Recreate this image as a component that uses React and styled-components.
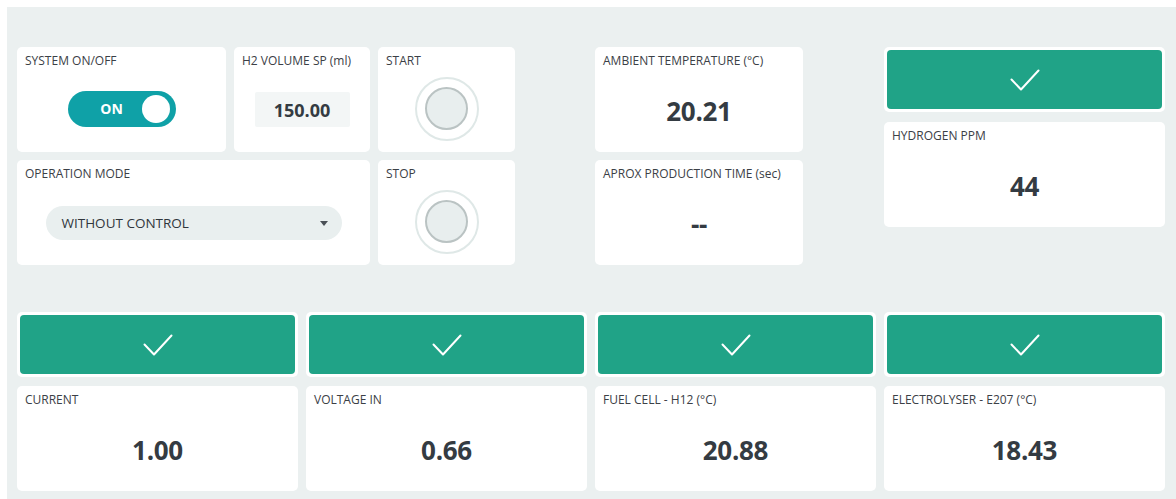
import styled, { createGlobalStyle } from "styled-components";

const GlobalStyle = createGlobalStyle`
  body {
    margin: 0;
    overflow: hidden;
    background: #ffffff;
    font-family: "Open Sans", "Liberation Sans", sans-serif;
    color: #343a40;
  }
`

const Page = styled.div`
  padding: 7px 0 0 7px;
`

const Panel = styled.div`
  background: #ebf0f0;
  height: 492px;
  box-sizing: border-box;
  padding: 40px 11px 8px 10px;
  display: flex;
  flex-direction: column;
  gap: 47px;
`

const TopSection = styled.div`
  display: grid;
  grid-template-columns: repeat(4, 1fr);
  column-gap: 8px;
  align-items: start;
`

const Controls = styled.div`
  grid-column: span 2;
  display: grid;
  grid-template-columns: 209px 136px 137px;
  grid-template-rows: 105px 105px;
  column-gap: 8px;
  row-gap: 8px;
`

const Column = styled.div`
  display: flex;
  flex-direction: column;
  gap: ${(p) => p.$gap || 8}px;
  width: ${(p) => (p.$width ? `${p.$width}px` : "auto")};
`

const BottomSection = styled.div`
  display: grid;
  grid-template-columns: repeat(4, 1fr);
  column-gap: 8px;
`

const Card = styled.div`
  background: #ffffff;
  border-radius: 5px;
  padding: 6px 8px;
  display: flex;
  flex-direction: column;
  height: 105px;
  box-sizing: border-box;
  grid-column: ${(p) => p.$span ? `span ${p.$span}` : "auto"};
`

const Label = styled.div`
  font-size: 12px;
  line-height: 16px;
  color: #3b4046;
  white-space: nowrap;
`

const Body = styled.div`
  flex: 1;
  display: flex;
  align-items: center;
  justify-content: center;
  padding-top: 2px;
`

const Value = styled.div`
  font-size: 26px;
  font-weight: 700;
  color: #343b42;
  letter-spacing: -0.3px;
  margin-top: 4px;
`

const Toggle = styled.div`
  width: 108px;
  height: 36px;
  border-radius: 18px;
  background: #0fa1a7;
  display: flex;
  align-items: center;
  padding: 0 6px 0 0;
  box-sizing: border-box;
`

const ToggleText = styled.span`
  flex: 1;
  text-align: center;
  color: #ffffff;
  font-weight: 700;
  font-size: 14px;
  padding-left: 14px;
`

const Knob = styled.span`
  width: 28px;
  height: 28px;
  border-radius: 50%;
  background: #ffffff;
`

const NumberBox = styled.div`
  width: 95px;
  height: 35px;
  background: #f3f6f6;
  border-radius: 2px;
  display: flex;
  align-items: center;
  justify-content: center;
  font-size: 18px;
  font-weight: 700;
  color: #343b42;
  margin-top: 2px;
`

const RoundButton = styled.div`
  width: 64px;
  height: 64px;
  border-radius: 50%;
  border: 2px solid #dfe8e7;
  box-sizing: border-box;
  display: flex;
  align-items: center;
  justify-content: center;
`

const RoundFace = styled.div`
  width: 43px;
  height: 43px;
  border-radius: 50%;
  border: 2px solid #bac3c3;
  box-sizing: border-box;
  background: #e8eeee;
`

const Select = styled.div`
  width: 296px;
  height: 34px;
  border-radius: 17px;
  background: #e9efef;
  display: flex;
  align-items: center;
  padding: 0 14px 0 16px;
  box-sizing: border-box;
  font-size: 13.5px;
  color: #30363c;
  margin-top: 3px;
`

const SelectText = styled.span`
  flex: 1;
`

const Caret = styled.span`
  width: 0;
  height: 0;
  border-left: 4px solid transparent;
  border-right: 4px solid transparent;
  border-top: 5px solid #4a5056;
`

const StatusCard = styled.div`
  background: #ffffff;
  border-radius: 5px;
  padding: 3px;
  height: 65px;
  box-sizing: border-box;
  display: flex;
`

const StatusFill = styled.div`
  flex: 1;
  background: #20a387;
  border-radius: 4px;
  display: flex;
  align-items: center;
  justify-content: center;
`

const CheckIcon = () => (
  <svg width="30" height="24" viewBox="0 0 30 24" fill="none">
    <polyline points="1.5,11.5 11,21.5 28.5,2.5" stroke="#ffffff" strokeWidth="2" strokeLinecap="round" strokeLinejoin="round" />
  </svg>
)

const Status = () => (
  <StatusCard>
    <StatusFill>
      <CheckIcon />
    </StatusFill>
  </StatusCard>
)

const ValueCard = ({ label, value }) => (
  <Card>
    <Label>{label}</Label>
    <Body>
      <Value>{value}</Value>
    </Body>
  </Card>
)

const sensors = [
  { label: "CURRENT", value: "1.00" },
  { label: "VOLTAGE IN", value: "0.66" },
  { label: "FUEL CELL - H12 (°C)", value: "20.88" },
  { label: "ELECTROLYSER - E207 (°C)", value: "18.43" },
]

export default function App() {
  return (
    <>
      <GlobalStyle />
      <Page>
        <Panel>
          <TopSection>
            <Controls>
              <Card>
                <Label>SYSTEM ON/OFF</Label>
                <Body>
                  <Toggle>
                    <ToggleText>ON</ToggleText>
                    <Knob />
                  </Toggle>
                </Body>
              </Card>
              <Card>
                <Label>H2 VOLUME SP (ml)</Label>
                <Body>
                  <NumberBox>150.00</NumberBox>
                </Body>
              </Card>
              <Card>
                <Label>START</Label>
                <Body>
                  <RoundButton>
                    <RoundFace />
                  </RoundButton>
                </Body>
              </Card>
              <Card $span={2}>
                <Label>OPERATION MODE</Label>
                <Body>
                  <Select>
                    <SelectText>WITHOUT CONTROL</SelectText>
                    <Caret />
                  </Select>
                </Body>
              </Card>
              <Card>
                <Label>STOP</Label>
                <Body>
                  <RoundButton>
                    <RoundFace />
                  </RoundButton>
                </Body>
              </Card>
            </Controls>
            <Column $width={208}>
              <ValueCard label="AMBIENT TEMPERATURE (°C)" value="20.21" />
              <ValueCard label="APROX PRODUCTION TIME (sec)" value="--" />
            </Column>
            <Column $gap={10}>
              <Status />
              <ValueCard label="HYDROGEN PPM" value="44" />
            </Column>
          </TopSection>
          <BottomSection>
            {sensors.map((s) => (
              <Column key={s.label} $gap={9}>
                <Status />
                <ValueCard label={s.label} value={s.value} />
              </Column>
            ))}
          </BottomSection>
        </Panel>
      </Page>
    </>
  )
}
